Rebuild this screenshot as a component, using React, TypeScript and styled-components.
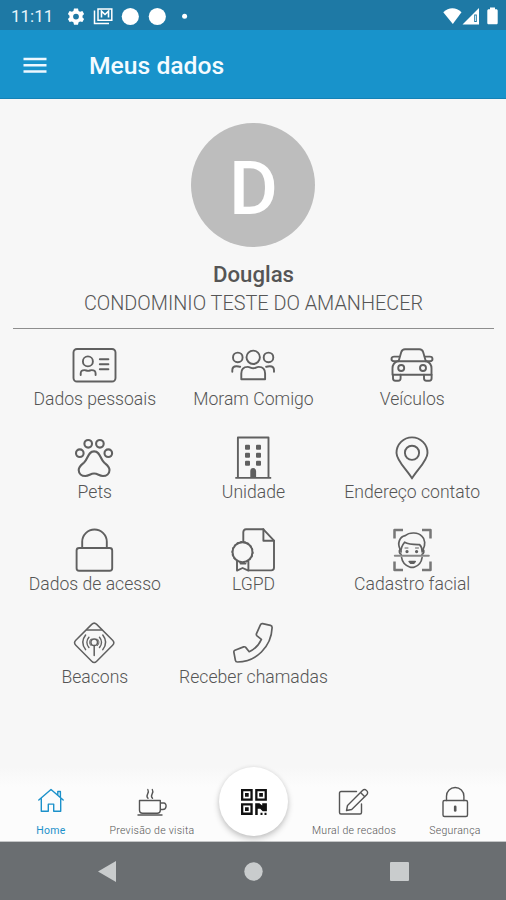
import React from "react";
import styled, { createGlobalStyle } from "styled-components";

const Global = createGlobalStyle`
  *, *::before, *::after { box-sizing: border-box; }
  html, body { margin: 0; padding: 0; background: #f7f7f7; }
  body { font-family: Roboto, "Liberation Sans", sans-serif; }
  svg { display: block; flex: none; overflow: visible; }
`;

const Screen = styled.div`
  width: 506px;
  height: 900px;
  display: flex;
  flex-direction: column;
  overflow: hidden;
  background: #f7f7f7;
`;

const StatusBar = styled.header`
  height: 30px;
  flex: none;
  display: flex;
  align-items: center;
  justify-content: space-between;
  padding: 1px 8px 0 11px;
  background: #1e79a5;
`;

const StatusGroup = styled.div`
  display: flex;
  align-items: center;
`;

const Clock = styled.span`
  width: 56px;
  font-size: 17px;
  line-height: 20px;
  color: #e6f5fc;
`;

const AppBar = styled.div`
  height: 69px;
  flex: none;
  display: flex;
  align-items: center;
  gap: 42px;
  padding: 3px 0 0 23px;
  background: #1893cb;
  border-bottom: 1px solid #1482b6;
`;

const MenuButton = styled.button`
  width: 24px;
  height: 24px;
  padding: 0;
  border: 0;
  background: none;
`;

const Title = styled.h1`
  margin: 0;
  font-size: 24.7px;
  line-height: 30px;
  font-weight: 500;
  color: #f4fbff;
`;

const Profile = styled.section`
  flex: none;
  height: 230px;
  margin: 0 12px 0 13px;
  padding-top: 24px;
  display: flex;
  flex-direction: column;
  align-items: center;
  border-bottom: 1.5px solid #8e8e8e;
`;

const Avatar = styled.div`
  width: 124px;
  height: 124px;
  margin-right: 1px;
  border-radius: 50%;
  display: flex;
  align-items: center;
  justify-content: center;
  padding: 6px 0 0 1px;
  font-size: 75px;
  line-height: 80px;
  font-weight: 500;
  color: #fff;
  background: #bdbdbd;
`;

const Name = styled.div`
  margin-top: 14px;
  font-size: 22.2px;
  line-height: 26px;
  font-weight: 500;
  color: #555;
`;

const Condo = styled.div`
  margin-top: 4px;
  font-size: 19.85px;
  line-height: 26px;
  font-weight: 300;
  color: #555;
  white-space: nowrap;
`;

const Options = styled.main`
  flex: 1;
  display: grid;
  grid-template-columns: repeat(3, 158.7px);
  grid-auto-rows: 67px;
  row-gap: 25.5px;
  justify-content: center;
  padding-top: 14px;
`;

const Option = styled.div`
  display: flex;
  flex-direction: column;
  align-items: center;
`;

const OptionLabel = styled.span`
  margin-top: 1.4px;
  padding-left: 1px;
  font-size: 17.6px;
  line-height: 22px;
  font-weight: 300;
  color: #555;
  white-space: nowrap;
`;

const TabBar = styled.nav`
  height: 75px;
  flex: none;
  display: grid;
  grid-template-columns: repeat(5, 1fr);
  padding-left: 1px;
  background: linear-gradient(#f7f7f7, #fcfcfc 20px);
  border-bottom: 1px solid #c4c6c7;
`;

const Tab = styled.div<{ $active?: boolean }>`
  display: flex;
  flex-direction: column;
  align-items: center;
  padding: 18px 1px 0 0;
  font-weight: ${(p) => (p.$active ? 400 : 300)};
  color: ${(p) => (p.$active ? "#1c91ca" : "#555")};
`;

const TabLabel = styled.span`
  margin-top: 7px;
  font-size: 10.5px;
  line-height: 14px;
  letter-spacing: 0.28px;
  white-space: nowrap;
`;

const QrButton = styled.button`
  width: 69px;
  height: 69px;
  padding: 0;
  border: 0;
  border-radius: 50%;
  justify-self: center;
  display: flex;
  align-items: center;
  justify-content: center;
  background: #fff;
  box-shadow: 0 3px 6px rgba(0, 0, 0, 0.22), 0 0 4px rgba(0, 0, 0, 0.06);
`;

const SystemBar = styled.footer`
  height: 58px;
  flex: none;
  display: grid;
  grid-template-columns: repeat(3, 146.5px);
  justify-content: center;
  align-items: center;
  justify-items: center;
  background: #6a6e71;
`;

const Line = ({ children, w = 1.9 }: { children: React.ReactNode; w?: number }) => (
  <svg width="44" height="44" viewBox="0 0 44 44" fill="none" stroke="#606060" strokeWidth={w} strokeLinecap="round" strokeLinejoin="round">
    {children}
  </svg>
);

const CardIcon = () => (
  <Line>
    <rect x="1.5" y="6" width="42" height="32.5" rx="3.5" />
    <circle cx="15.9" cy="18.4" r="5" />
    <path d="M8.7 32v-1.6c0-2.3 1.6-3.3 3.8-3.3 1.5 0 2 .8 3.6.8s2.1-.8 3.6-.8c2.2 0 3.9 1 3.9 3.3V32" />
    <path d="M27.8 16.2h8.6M27.8 21.2h8.6M27.8 26.2h8.6" />
  </Line>
);

const PeopleIcon = () => (
  <Line>
    <circle cx="22.2" cy="14.3" r="6.7" />
    <circle cx="6.8" cy="14.4" r="4.8" />
    <circle cx="37.5" cy="14.4" r="4.8" />
    <path d="M10.3 36.2v-5.7c0-4 2.2-6.6 6.4-6.6 2.4 0 3 1.3 5.5 1.3s3.1-1.3 5.5-1.3c4.2 0 6.4 2.6 6.4 6.6v5.7z" />
    <path d="M1.3 28.8v-1.5c0-2.8 1.8-4 4.1-4 1.8 0 2.2.4 3.8.5M43 28.8v-1.5c0-2.8-1.8-4-4.1-4-1.8 0-2.2.4-3.8.5" />
  </Line>
);

const CarIcon = () => (
  <Line>
    <path d="M8.6 18.2 11.2 9.2c.6-2 1.8-2.9 3.8-2.9h14.4c2 0 3.2.9 3.8 2.9l2.6 9" />
    <path d="M7.8 18.2h28.4c3.6 1.4 5.3 3.8 5.3 7v6.6H2.5v-6.6c0-3.2 1.7-5.6 5.3-7z" />
    <path d="M9.2 13.6H4.2c-1.6 0-2.7 1-2.7 2.4s1 2.2 2.6 2.2h3.7M34.8 13.6h5c1.6 0 2.7 1 2.7 2.4s-1 2.2-2.6 2.2h-3.7" />
    <circle cx="11.2" cy="25" r="3" />
    <circle cx="33" cy="25" r="3" />
    <path d="M3 31.8v3.4c0 1.6 1 2.5 2.4 2.5h2.8c1.5 0 2.4-.9 2.4-2.5v-3.4M34 31.8v3.4c0 1.6 1 2.5 2.4 2.5h2.8c1.5 0 2.4-.9 2.4-2.5v-3.4" />
  </Line>
);

const PawIcon = () => (
  <Line w={2.1}>
    <circle cx="16.2" cy="7.8" r="3.8" />
    <circle cx="27.9" cy="7.8" r="3.8" />
    <circle cx="7.8" cy="17.2" r="3.8" />
    <circle cx="36.3" cy="17.2" r="3.8" />
    <path d="M22.1 15.4c-6.3 0-5.8 7.2-10.2 11.3-3 2.5-5.2 3.8-5.2 7.3 0 3.7 3 6 6.6 6 3.8 0 5-2.5 8.8-2.5s5 2.5 8.8 2.5c3.6 0 6.6-2.3 6.6-6 0-3.5-2.2-4.8-5.2-7.3-4.4-4.1-3.9-11.3-10.2-11.3z" />
  </Line>
);

const BuildingIcon = () => (
  <Line>
    <path d="M6.9 41.5V1.5h30.6v40M4.3 41.9h35.9" strokeLinecap="butt" />
    <g fill="#606060" stroke="none">
      {[11.2, 19.2, 27.2].map((y) => (
        <React.Fragment key={y}>
          <rect x="14" y={y - 2.5} width="5" height="5" rx="1" />
          <rect x="25" y={y - 2.5} width="5" height="5" rx="1" />
        </React.Fragment>
      ))}
      <path d="M19.3 41.5V35a2.9 2.9 0 0 1 5.8 0v6.5z" />
    </g>
  </Line>
);

const PinIcon = () => (
  <Line>
    <path d="M22 42.4C17.5 34.5 6.5 24.7 6.5 16.9a15.5 15.5 0 0 1 31 0C37.5 24.7 26.5 34.5 22 42.4z" />
    <circle cx="22" cy="16.8" r="7.1" />
  </Line>
);

const PadlockIcon = () => (
  <Line>
    <rect x="4.6" y="20" width="35.6" height="22.8" rx="2.5" />
    <path d="M10.2 20v-6.2a12.3 12.3 0 0 1 24.6 0V20" />
  </Line>
);

const CertificateIcon = () => (
  <Line>
    <path d="M12.3 13.2V4.2c0-1.9.9-2.9 2.8-2.9h17.3L43 12.7v26.9c0 1.9-.9 2.8-2.8 2.8H18.4" />
    <path d="M32.4 1.3v11.4H43" />
    <circle cx="11.5" cy="24.2" r="9.9" />
    <circle cx="11.5" cy="24.2" r="10.4" strokeDasharray="1.2 2.4" strokeWidth="1.4" />
    <path d="M6 33.6v9l5.6-2.6 5.8 2.6v-9M9.5 35.6h5" />
  </Line>
);

const FaceIcon = () => (
  <Line w={1.7}>
    <path d="M4.5 10.5V2H13M32 2h8.5v8.5M40.5 33.5V42H32M13 42H4.5v-8.5" strokeWidth="2.5" strokeLinecap="butt" stroke="#777" />
    <path d="M10.2 21.5C7 15 9.6 8.8 15.2 7.7c4.3-3.8 13.2-3.5 16.6.5 3.5 3 3.8 8.6 1.2 13.3" />
    <path d="M11 24c-.3-4.5 1.3-7 3.6-9.8 4.5 2.5 10 2.3 15 2.4 1.8 1.8 2.7 3.6 2.6 7.4" />
    <path d="M10.2 21.5c-1.6 1.4-.8 4.2 1 4.7M33 21.5c1.6 1.4.8 4.2-1 4.7M11.6 29.5c.6 4.5 4 8 8 9.5 1.6.6 3.4.6 5 0 4-1.5 6.9-5 7.5-9.5" />
    <path d="M15 20h3M25.5 20h3" strokeWidth="1" />
    <circle cx="17" cy="23.6" r=".8" fill="#606060" />
    <circle cx="26.6" cy="23.6" r=".8" fill="#606060" />
    <path d="M19.2 33.5h6l-1.5 1.6h-3z" />
    <path d="M4.8 27.8H38.8" stroke="#888" strokeWidth="2" />
  </Line>
);

const BeaconIcon = () => (
  <Line w={1.5}>
    <path d="M19.7 3.4c1.5-1.5 3.5-1.5 5 0l15.9 15.9c1.5 1.5 1.5 3.5 0 5L24.7 40.2c-1.5 1.5-3.5 1.5-5 0L3.8 24.3c-1.5-1.5-1.5-3.5 0-5z" />
    <path d="M14.9 8.9h14.6" />
    <circle cx="22.2" cy="21.3" r="3.3" />
    <path d="M22.2 24.6v10M16.9 16.2c-2.6 3-2.6 7.2 0 10.2M27.5 16.2c2.6 3 2.6 7.2 0 10.2M13.6 14c-3.6 4.6-3.6 10 0 14.6M30.8 14c3.6 4.6 3.6 10 0 14.6" />
    <path d="M19 18c-2 2-2 4.6 0 6.6M25.4 18c2 2 2 4.6 0 6.6" strokeWidth="1" />
  </Line>
);

const PhoneIcon = () => (
  <Line w={1.7}>
    <path d="M31.6 2.6 39.5 4.4c1.3.3 1.7 1.1 1.6 2.4C40.3 25.8 25 40.9 6.5 41c-1.3 0-1.9-.5-2.1-1.6L2.9 31.3c-.2-1 .1-1.6 1-2l8.7-3.4c.9-.3 1.5-.2 2.1.5l3.5 4.3c5.4-2.4 9.7-6.7 12.2-12.3l-4.4-3.6c-.7-.6-.9-1.2-.5-2.1l3.9-8.9c.4-.9 1.1-1.4 2.2-1.2z" />
  </Line>
);

const options: { label: string; icon: React.ReactNode }[] = [
  { label: "Dados pessoais", icon: <CardIcon /> },
  { label: "Moram Comigo", icon: <PeopleIcon /> },
  { label: "Veículos", icon: <CarIcon /> },
  { label: "Pets", icon: <PawIcon /> },
  { label: "Unidade", icon: <BuildingIcon /> },
  { label: "Endereço contato", icon: <PinIcon /> },
  { label: "Dados de acesso", icon: <PadlockIcon /> },
  { label: "LGPD", icon: <CertificateIcon /> },
  { label: "Cadastro facial", icon: <FaceIcon /> },
  { label: "Beacons", icon: <BeaconIcon /> },
  { label: "Receber chamadas", icon: <PhoneIcon /> },
];

const TabIcon = ({ children }: { children: React.ReactNode }) => (
  <svg width="32" height="32" viewBox="0 0 32 32" fill="none" stroke="currentColor" strokeWidth="1.4" strokeLinecap="round" strokeLinejoin="round">
    {children}
  </svg>
);

export default function App() {
  return (
    <Screen>
      <Global />
      <StatusBar>
        <StatusGroup>
          <Clock>11:11</Clock>
          <svg width="122" height="20" viewBox="67 5 122 20" fill="#fff">
            <path fillRule="evenodd" d="M74 7.5h4l.6 2.4 1.5.9 2.3-.7 1.7 3-1.6 1.6v1.8l1.6 1.6-1.7 3-2.3-.7-1.5.9-.6 2.4h-4l-.6-2.4-1.5-.9-2.3.7-1.7-3 1.6-1.6v-1.8l-1.6-1.6 1.7-3 2.3.7 1.5-.9zM76 12.7a2.9 2.9 0 1 0 0 5.8 2.9 2.9 0 0 0 0-5.8z" />
            <path d="M94.5 9.5v13h14.5" fill="none" stroke="#fff" strokeWidth="1.5" />
            <path d="M98 8h13.8v11.3H98z" fill="none" stroke="#fff" strokeWidth="1.5" />
            <path d="M101.5 16.5V10.200l3.500 3.300 3.500-3.300v6.300" fill="none" stroke="#fff" strokeWidth="1.6" />
            <circle cx="130.3" cy="15.5" r="8.6" />
            <circle cx="157.3" cy="15.5" r="8.6" />
            <circle cx="184.6" cy="15.2" r="2.5" />
          </svg>
        </StatusGroup>
        <svg width="56" height="20" viewBox="442 5 56 20" fill="#fff">
          <path d="M443.3 11.2c5.4-5.3 12.8-5.3 18.2 0L452.8 23z" />
          <path d="M479 7v16.5h-16.5z" />
          <path d="M475.5 13.5v7.5" stroke="#1e79a5" strokeWidth="2.6" />
          <path d="M475.5 14.5v5.5" stroke="#fff" strokeWidth=".8" />
          <path d="M490 6.5h5v1.8h1.2c1 0 1.5.6 1.5 1.5v12c0 1-.5 1.5-1.5 1.5h-7.4c-1 0-1.5-.5-1.5-1.5v-12c0-.9.5-1.5 1.5-1.5h1.2z" />
        </svg>
      </StatusBar>
      <AppBar>
        <MenuButton aria-label="Menu">
          <svg width="24" height="24" viewBox="0 0 24 24" stroke="#edf8ff" strokeWidth="2.5">
            <path d="M.5 5h23M.5 11.3h23M.5 17.6h23" />
          </svg>
        </MenuButton>
        <Title>Meus dados</Title>
      </AppBar>
      <Profile>
        <Avatar>D</Avatar>
        <Name>Douglas</Name>
        <Condo>CONDOMINIO TESTE DO AMANHECER</Condo>
      </Profile>
      <Options>
        {options.map((o) => (
          <Option key={o.label}>
            {o.icon}
            <OptionLabel>{o.label}</OptionLabel>
          </Option>
        ))}
      </Options>
      <TabBar>
        <Tab $active>
          <TabIcon>
            <path d="M3.8 15 16 4.5 28.2 15M6.3 13.5v12.8h7v-7.2h5.4v7.2h7V13.5M22.8 9.7V6.5h2.6v5.6" />
          </TabIcon>
          <TabLabel>Home</TabLabel>
        </Tab>
        <Tab>
          <TabIcon>
            <path d="M3.5 15.5h20.8v9.7c0 2-1 3-3 3H6.5c-2 0-3-1-3-3zM24.3 18h3.5c3.2 0 3.2 6.5-1 6.500h-2.500M2 30h24" />
            <path d="M12 13.2c-3.5-3.2 2.3-4.7-.2-8.7M16.500 13.200c-3.500-3.200 2.300-4.700-.2-8.700" />
          </TabIcon>
          <TabLabel>Previsão de visita</TabLabel>
        </Tab>
        <QrButton aria-label="QR code">
          <svg width="26" height="26" viewBox="0 0 26 26" fill="#111">
            <path fillRule="evenodd" d="M0 0h11.7v11.7H0zM2.3 2.3v7.1h7.1V2.3zM14.2 0h11.7v11.7H14.2zM16.5 2.3v7.1h7.1V2.3zM0 14.2h11.7v11.7H0zM2.3 16.5v7.1h7.1v-7.1z" />
            <path d="M4 4h3.7v3.7H4zM18.2 4h3.7v3.7h-3.7zM4 18.2h3.7v3.7H4z" />
            <path d="M14.2 14.2h4.2l2.8 2.3v-2.3h4.7v8h-4.2l-2.5-2.5h-2.5v6.2h-2.5zM19.5 23.7h2v2.2h-2zM23.5 23.7h2v2.2h-2z" />
          </svg>
        </QrButton>
        <Tab>
          <TabIcon>
            <path d="M18.5 6.5H3c-.9 0-1.5.6-1.5 1.5v19.5c0 .9.6 1.5 1.5 1.5h19c.9 0 1.5-.6 1.5-1.5V19" />
            <path d="m9.5 20.5 15-15c2.7-2.6 7 1.5 4.2 4.3l-15 14.7-5.2 1zM22.5 7.5l4.3 4.3" />
          </TabIcon>
          <TabLabel>Mural de recados</TabLabel>
        </Tab>
        <Tab>
          <TabIcon>
            <rect x="4" y="15.5" width="24.5" height="16" rx="1.5" />
            <path d="M7.5 15.5V11.2a8.7 8.7 0 0 1 17.4 0v4.3" />
            <path d="M16.2 21.8v3.7" strokeWidth="2.6" />
          </TabIcon>
          <TabLabel>Segurança</TabLabel>
        </Tab>
      </TabBar>
      <SystemBar>
        <svg width="18" height="21" viewBox="0 0 18 21"><path d="M0 10.5 18 0v21z" fill="#c9cccd" /></svg>
        <svg width="19" height="19" viewBox="0 0 19 19"><circle cx="9.5" cy="9.5" r="9.2" fill="#c9cccd" /></svg>
        <svg width="19" height="19" viewBox="0 0 19 19"><rect width="19" height="19" rx="1" fill="#c9cccd" /></svg>
      </SystemBar>
    </Screen>
  );
}
